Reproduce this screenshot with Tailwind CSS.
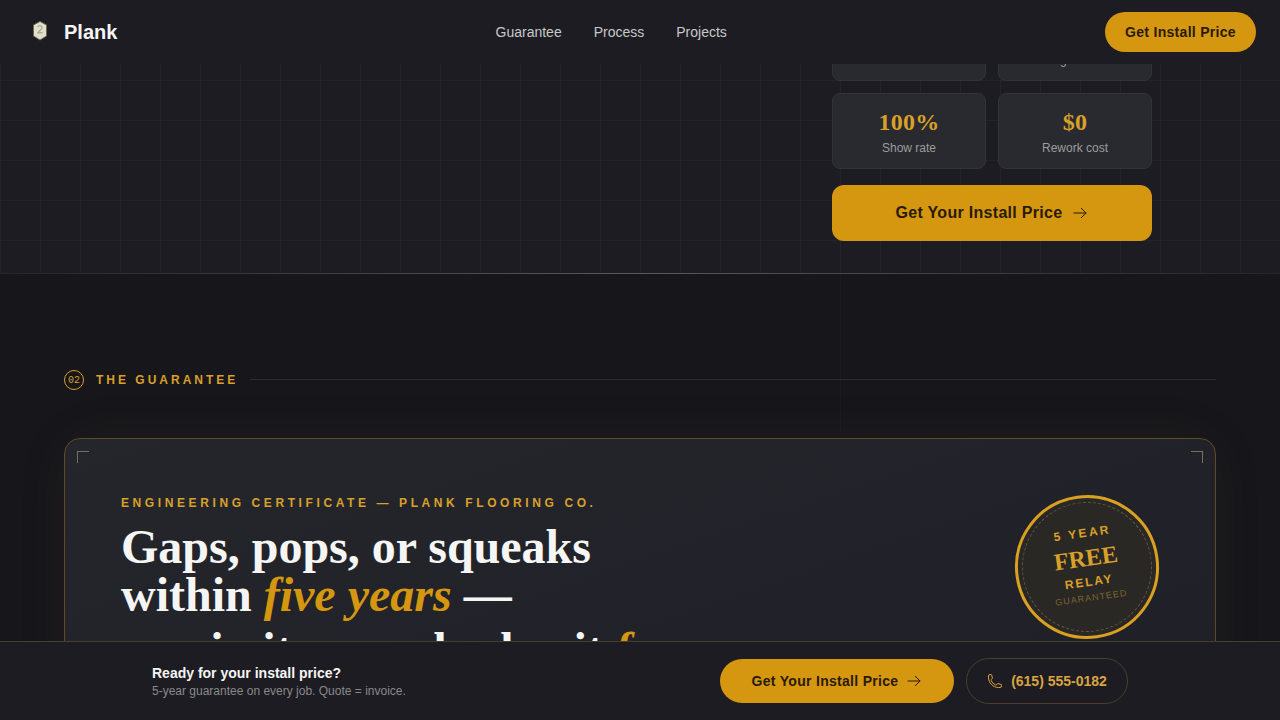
<!DOCTYPE html>
<html lang="en">
<head>
<meta charset="utf-8">
<title>Plank</title>
<script src="https://cdn.jsdelivr.net/npm/@tailwindcss/browser@4"></script>
</head>
<body class="m-0 h-[720px] overflow-hidden bg-[#16161b] font-['Liberation_Sans',sans-serif] text-white">

<header class="fixed inset-x-0 top-0 z-20 flex h-16 items-center justify-between bg-[#1c1c22] px-6">
  <div class="flex items-center gap-3">
    <svg class="h-7 w-7" viewBox="0 0 28 28" fill="none">
      <path d="M16 3.500l6.500 3.500v11L16 22l-6.500-4V7z" fill="#e2e0cc" stroke="#6b6b4c" stroke-width="1" stroke-linejoin="round"/>
      <path d="M13.500 9c1.500-2 5-1.500 4.500 1 -.3 1.500-3 2.500-4 5 1.500-.5 3-.5 4.500 0" stroke="#a5a596" stroke-width="1.200"/>
    </svg>
    <span class="text-[20px] font-bold leading-7 text-[#f5f5f4]">Plank</span>
  </div>
  <nav class="flex items-center gap-8 text-sm text-[#c9c9c9]">
    <a>Guarantee</a>
    <a>Process</a>
    <a>Projects</a>
  </nav>
  <a class="flex h-10 w-[151px] items-center justify-center rounded-full bg-[#d4970f] text-sm font-bold tracking-[0.3px] text-[#2a1a08]">Get Install Price</a>
</header>

<main class="relative h-[720px] overflow-hidden">
  <section class="relative h-[274px] bg-[#1c1c22] bg-[linear-gradient(rgba(255,255,255,0.03)_1px,transparent_1px),linear-gradient(90deg,rgba(255,255,255,0.03)_1px,transparent_1px)] bg-[size:40px_40px]">
    <div class="absolute bottom-[33px] left-[832px] flex w-[320px] flex-col gap-4">
      <div class="grid grid-cols-2 gap-3">
        <div class="flex h-[76px] flex-col items-center justify-center rounded-lg border border-[#33343b] bg-[#292a30]">
          <span class="font-['Liberation_Serif',serif] text-2xl font-bold leading-8 tracking-[0.2px] text-[#d9a02a]">2,400+</span>
          <span class="mt-0.5 text-xs leading-4 text-[#9c9c9c]">Installs</span>
        </div>
        <div class="flex h-[76px] flex-col items-center justify-center rounded-lg border border-[#33343b] bg-[#292a30]">
          <span class="font-['Liberation_Serif',serif] text-2xl font-bold leading-8 tracking-[0.2px] text-[#d9a02a]">0</span>
          <span class="mt-0.5 text-xs leading-4 text-[#9c9c9c]">Avg claims</span>
        </div>
        <div class="flex h-[76px] flex-col items-center justify-center rounded-lg border border-[#33343b] bg-[#292a30]">
          <span class="font-['Liberation_Serif',serif] text-2xl font-bold leading-8 tracking-[0.2px] text-[#d9a02a]">100%</span>
          <span class="mt-0.5 text-xs leading-4 text-[#9c9c9c]">Show rate</span>
        </div>
        <div class="flex h-[76px] flex-col items-center justify-center rounded-lg border border-[#33343b] bg-[#292a30]">
          <span class="font-['Liberation_Serif',serif] text-2xl font-bold leading-8 tracking-[0.2px] text-[#d9a02a]">$0</span>
          <span class="mt-0.5 text-xs leading-4 text-[#9c9c9c]">Rework cost</span>
        </div>
      </div>
      <a class="flex h-14 items-center justify-center gap-2.5 rounded-xl bg-[#d4970f] text-base font-bold tracking-[0.3px] text-[#2a1a08]">
        Get Your Install Price
        <svg class="h-4 w-4" viewBox="0 0 24 24" fill="none" stroke="currentColor" stroke-width="1.500" stroke-linecap="round" stroke-linejoin="round"><path d="M3 12h18M14 5l7 7-7 7"/></svg>
      </a>
    </div>
    <span class="absolute inset-x-0 bottom-0 h-px bg-gradient-to-r from-[#26262c] via-[#58585f] to-[#26262c]"></span>
  </section>

  <span class="absolute left-[840px] top-[274px] h-[160px] w-px bg-white/[0.02]"></span>

  <section class="bg-[#16161b] px-16 pt-[96px]">
    <div class="flex h-5 items-center gap-3">
      <span class="flex h-5 w-5 items-center justify-center rounded-full border border-[#d9a02a] font-['Liberation_Mono',monospace] text-[10px] text-[#d9a02a]">02</span>
      <span class="text-xs font-bold tracking-[3px] text-[#d9a02a]">THE GUARANTEE</span>
      <span class="mb-[2px] h-px flex-1 bg-[#2c2c33]"></span>
    </div>
    <div class="relative mt-[48px] flex h-[400px] justify-between rounded-2xl border border-[#5f4c26] bg-gradient-to-br from-[#25262c] to-[#1e1f26] px-14 pt-14 shadow-[0_0_60px_rgba(212,148,10,0.05)]">
      <span class="absolute left-3 top-3 h-3 w-3 border-l border-t border-[#77705f]"></span>
      <span class="absolute right-3 top-3 h-3 w-3 border-r border-t border-[#77705f]"></span>
      <div class="w-[640px]">
        <p class="text-xs font-bold leading-4 tracking-[3.6px] text-[#d9a02a]">ENGINEERING CERTIFICATE — PLANK FLOORING CO.</p>
        <h2 class="mt-3 font-['Liberation_Serif',serif] text-5xl font-bold leading-[48px] text-[#f5f5f4]">Gaps, pops, or squeaks<br>within <em class="text-[#d4970f]">five years</em> —<span class="mt-[7px] block">we rip it up and relay it <em class="text-[#d4970f]">free</em></span></h2>
      </div>
      <div class="relative flex h-36 w-36 -rotate-[8deg] flex-col items-center justify-center rounded-full border-[3px] border-[#d9a022] bg-[#2a2825] pb-1 text-[#d9a02a]">
        <span class="absolute inset-[4px] rounded-full border border-dashed border-[#5e5a48]"></span>
        <span class="text-xs font-bold leading-4 tracking-[2.4px]">5 YEAR</span>
        <span class="mt-[3px] font-['Liberation_Serif',serif] text-2xl font-bold leading-7">FREE</span>
        <span class="mt-0.5 text-xs font-bold leading-4 tracking-[1.8px]">RELAY</span>
        <span class="text-[9px] leading-4 tracking-[1px] text-[#7a6430]">GUARANTEED</span>
      </div>
    </div>
  </section>
</main>

<div class="fixed inset-x-0 bottom-0 z-20 flex h-[79px] items-center justify-between border-t border-[#4a3f2a] bg-[#1c1c22] px-[152px]">
  <div>
    <p class="text-sm font-bold leading-5 text-[#f5f5f4]">Ready for your install price?</p>
    <p class="text-xs leading-4 text-[#8a8a8a]">5-year guarantee on every job. Quote = invoice.</p>
  </div>
  <div class="flex items-center gap-3">
    <a class="flex h-11 w-[234px] items-center justify-center gap-2 rounded-full bg-[#d4970f] text-sm font-bold tracking-[0.3px] text-[#2a1a08]">
      Get Your Install Price
      <svg class="h-4 w-4" viewBox="0 0 24 24" fill="none" stroke="currentColor" stroke-width="1.500" stroke-linecap="round" stroke-linejoin="round"><path d="M3 12h18M14 5l7 7-7 7"/></svg>
    </a>
    <a class="flex h-[46px] w-[162px] items-center justify-center gap-2 rounded-full border border-[#4a3f2a] text-sm font-bold text-[#d9a441]">
      <svg class="h-4 w-4" viewBox="0 0 24 24" fill="none" stroke="currentColor" stroke-width="1.500" stroke-linecap="round" stroke-linejoin="round"><path d="M2.250 6.750c0 8.284 6.716 15 15 15h2.250a2.250 2.250 0 002.250-2.250v-1.372c0-.516-.351-.966-.852-1.091l-4.423-1.106c-.44-.11-.902.055-1.173.417l-.97 1.293c-.282.376-.769.542-1.210.38a12.035 12.035 0 01-7.143-7.143c-.162-.441.004-.928.380-1.210l1.293-.970c.363-.271.527-.734.417-1.173L6.963 3.102a1.125 1.125 0 00-1.091-.852H4.500A2.250 2.250 0 002.250 4.500v2.250z"/></svg>
      (615) 555-0182
    </a>
  </div>
</div>
</body>
</html>
